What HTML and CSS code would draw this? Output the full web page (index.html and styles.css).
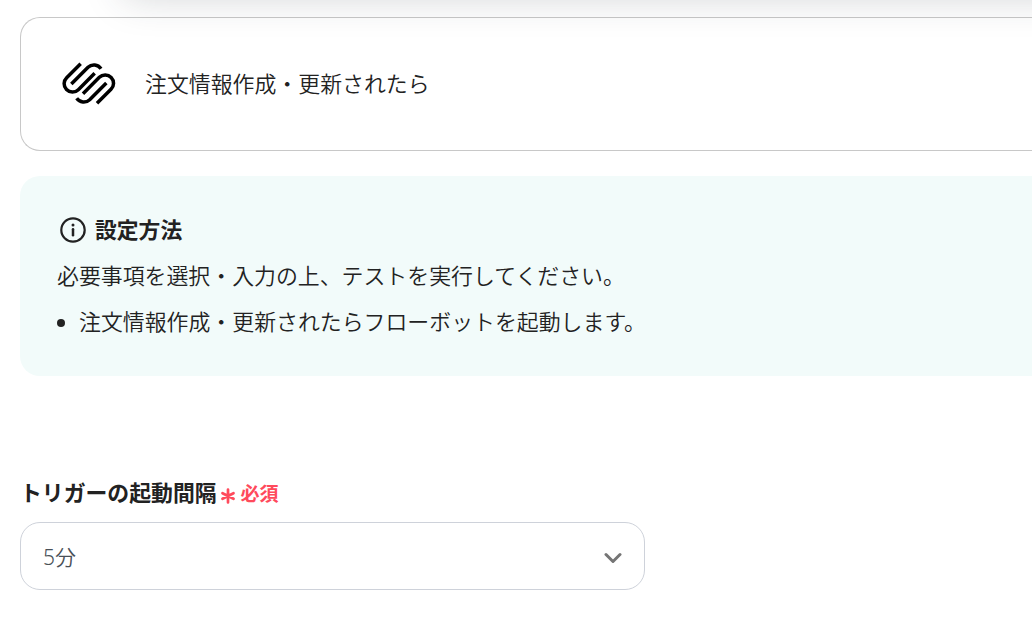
FILE: index.html
```html
<!DOCTYPE html>
<html lang="ja">
<head>
  <meta charset="UTF-8">
  <title>トリガーの設定</title>
  <link rel="stylesheet" href="styles.css">
</head>
<body>

  <div class="top-shadow">
    <div class="top-panel"></div>
  </div>

  <div class="app-card">
    <svg class="app-logo" viewBox="36 36 162 129" fill="none" stroke="#000" stroke-width="10.5">
      <path d="M92 41 L50 83 A25 25 0 0 0 85 119 L134 70"/>
      <path d="M64 102 L114 52 A26 26 0 0 1 153 56"/>
      <path d="M141 160 L183 118 A25 25 0 0 0 148 82 L99 131"/>
      <path d="M169 99 L119 149 A26 26 0 0 1 80 145"/>
    </svg>
    <span>注文情報作成・更新されたら</span>
  </div>

  <div class="guide">
    <h2>
      <svg class="info-icon" viewBox="0 0 26 26" fill="none" stroke="#222" stroke-width="2.2">
        <circle cx="13" cy="13" r="11.7"/>
        <path d="M13 12.3v6" stroke-width="2.5" stroke-linecap="round"/>
        <circle cx="13" cy="8" r="1.5" fill="#222" stroke="none"/>
      </svg>
      設定方法
    </h2>
    <p>必要事項を選択・入力の上、テストを実行してください。</p>
    <ul>
      <li>注文情報作成・更新されたらフローボットを起動します。</li>
    </ul>
  </div>

  <div class="field">
    <div class="label">
      トリガーの起動間隔
      <span class="required">
        <svg class="asterisk" viewBox="0 0 14 16" stroke="#ff4a5c" stroke-width="2.7" stroke-linecap="round">
          <path d="M7 1.5v13M1.5 5.2l11 5.6M12.5 5.2l-11 5.6"/>
        </svg>
        必須
      </span>
    </div>
    <div class="select">
      <span>5分</span>
      <svg class="chevron" viewBox="0 0 18 12" fill="none" stroke="#757575" stroke-width="3" stroke-linecap="round" stroke-linejoin="round">
        <path d="M2 2.5l7 7 7-7"/>
      </svg>
    </div>
  </div>

</body>
</html>
```

FILE: styles.css
```css
* {
  box-sizing: border-box;
}
body {
  margin: 0;
  padding: 17px 0 0 20px;
  font-family: 'Noto Sans', 'Noto Sans CJK JP', sans-serif;
  font-size: 21.9px;
  font-weight: 350;
  line-height: 32px;
  color: #222;
  background: #fff;
  overflow: hidden;
}
/* bottom shadow of the panel above */
.top-shadow {
  position: absolute;
  top: 0;
  left: 0;
  right: 0;
  height: 40px;
  overflow: hidden;
}
.top-panel {
  height: 50px;
  margin: -60px -60px 0 124px;
  box-shadow: 0 6px 40px rgba(40, 50, 60, 0.22);
}
.app-card {
  display: flex;
  align-items: center;
  gap: 29px;
  height: 134px;
  padding: 0 0 1px 41px;
  border: 1px solid #c8c8c8;
  border-right: none;
  border-radius: 20px 0 0 20px;
}
.app-logo {
  width: 54px;
  height: 43px;
}
.guide {
  height: 200px;
  margin-top: 25px;
  padding: 38px 37px;
  background: #f2fbfa;
  border-radius: 20px 0 0 20px;
}
h2 {
  display: flex;
  align-items: center;
  gap: 9px;
  margin: 0;
  padding-left: 3px;
  font-size: 21.8px;
  font-weight: 700;
}
.info-icon {
  width: 26px;
  height: 26px;
}
p {
  margin: 14px 0;
}
ul {
  margin: 0;
  padding-left: 22px;
}
.field {
  width: 625px;
  margin-top: 100px;
}
.label {
  display: flex;
  align-items: center;
  gap: 4px;
  font-size: 21.85px;
  font-weight: 700;
}
.required {
  display: flex;
  align-items: center;
  gap: 6px;
  padding-top: 2px;
  font-size: 19px;
  color: #ff4a5c;
}
.asterisk {
  width: 14px;
  height: 16px;
  margin-top: 4px;
}
.select {
  display: flex;
  align-items: center;
  justify-content: space-between;
  height: 68px;
  margin-top: 12px;
  padding: 2px 22px 0;
  border: 1px solid #ced2da;
  border-radius: 20px;
  color: #495057;
}
.select span {
  font-size: 21px;
}
.chevron {
  width: 18px;
  height: 12px;
  margin-top: 1px;
}
```
